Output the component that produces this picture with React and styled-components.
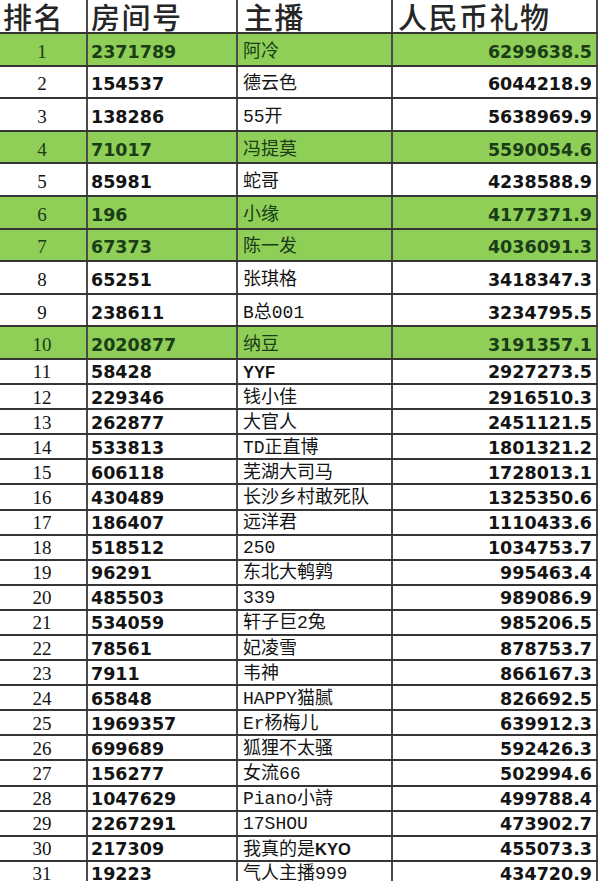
import styled, { createGlobalStyle } from "styled-components";

const GlobalStyle = createGlobalStyle`
  html, body {
    margin: 0;
    padding: 0;
    background: #ffffff;
    overflow: hidden;
  }
`;

const Sheet = styled.table`
  width: 597px;
  border-collapse: collapse;
  table-layout: fixed;
  background: #fff;
`;

const Col = styled.col`
  width: ${(p) => p.$w}px;
`;

const HeadRow = styled.tr`
  height: 33px;
`;

const HeadCell = styled.th`
  padding: 0 0 0 ${(p) => p.$pad || 4}px;
  height: 31px;
  text-align: left;
  vertical-align: middle;
  font-family: "Noto Sans CJK SC", sans-serif;
  font-size: 29px;
  font-weight: 500;
  line-height: 31px;
  color: #262626;
  border-bottom: 2px solid #353535;
  border-right: 2px solid #4a4a4a;
  white-space: nowrap;
  letter-spacing: 1.5px;
`;

const Row = styled.tr`
  height: ${(p) => (p.$big ? 32.6 : 25.1)}px;
  background: ${(p) => (p.$green ? "#8fcf58" : "#ffffff")};
  color: ${(p) => (p.$green ? "#1a3d17" : "#141414")};
`;

const Cell = styled.td`
  padding: ${(p) => (p.$big ? 5 : 2)}px 0 0;
  height: ${(p) => (p.$big ? 25.6 : 21.1)}px;
  line-height: 20px;
  border-bottom: 2px solid #353535;
  border-right: 2px solid #4a4a4a;
  white-space: nowrap;
  overflow: hidden;
`;

const Rank = styled(Cell)`
  text-align: center;
  font-family: "Liberation Serif", serif;
  font-size: 19px;
  padding-right: 2px;
`;

const Room = styled(Cell)`
  padding-left: 3px;
  font-family: "DejaVu Sans", sans-serif;
  font-weight: 700;
  font-size: 17.5px;
`;

const Host = styled(Cell)`
  padding-left: 5px;
  font-family: "Liberation Mono", "Noto Sans CJK SC", monospace;
  font-size: 18px;
`;

const Strong = styled.span`
  font-family: "Liberation Sans", sans-serif;
  font-weight: 700;
  font-size: 16.5px;
`;

const Gift = styled(Cell)`
  text-align: right;
  padding-right: 4px;
  font-family: "DejaVu Sans", sans-serif;
  font-weight: 700;
  font-size: 17.5px;
`;

const rows = [
  ["2371789", "阿冷", "6299638.5", true],
  ["154537", "德云色", "6044218.9"],
  ["138286", "55开", "5638969.9"],
  ["71017", "冯提莫", "5590054.6", true],
  ["85981", "蛇哥", "4238588.9"],
  ["196", "小缘", "4177371.9", true],
  ["67373", "陈一发", "4036091.3", true],
  ["65251", "张琪格", "3418347.3"],
  ["238611", "B总001", "3234795.5"],
  ["2020877", "纳豆", "3191357.1", true],
  ["58428", ["", "YYF"], "2927273.5"],
  ["229346", "钱小佳", "2916510.3"],
  ["262877", "大官人", "2451121.5"],
  ["533813", "TD正直博", "1801321.2"],
  ["606118", "芜湖大司马", "1728013.1"],
  ["430489", "长沙乡村敢死队", "1325350.6"],
  ["186407", "远洋君", "1110433.6"],
  ["518512", "250", "1034753.7"],
  ["96291", "东北大鹌鹑", "995463.4"],
  ["485503", "339", "989086.9"],
  ["534059", "轩子巨2兔", "985206.5"],
  ["78561", "妃凌雪", "878753.7"],
  ["7911", "韦神", "866167.3"],
  ["65848", "HAPPY猫腻", "826692.5"],
  ["1969357", "Er杨梅儿", "639912.3"],
  ["699689", "狐狸不太骚", "592426.3"],
  ["156277", "女流66", "502994.6"],
  ["1047629", "Piano小詩", "499788.4"],
  ["2267291", "17SHOU", "473902.7"],
  ["217309", ["我真的是", "KYO"], "455073.3"],
  ["19223", "气人主播999", "434720.9"],
];

function HostName({ name }) {
  if (Array.isArray(name)) {
    return (
      <>
        {name[0]}
        <Strong>{name[1]}</Strong>
      </>
    );
  }
  return name;
}

export default function App() {
  return (
    <>
      <GlobalStyle />
      <Sheet>
        <colgroup>
          <Col $w={87} />
          <Col $w={150} />
          <Col $w={155} />
          <Col $w={205} />
        </colgroup>
        <thead>
          <HeadRow>
            <HeadCell $pad={3}>排名</HeadCell>
            <HeadCell $pad={3}>房间号</HeadCell>
            <HeadCell $pad={6}>主播</HeadCell>
            <HeadCell $pad={5}>人民币礼物</HeadCell>
          </HeadRow>
        </thead>
        <tbody>
          {rows.map(([room, name, gift, green], i) => {
            const big = i < 10;
            return (
              <Row key={room} $green={green} $big={big}>
                <Rank $big={big}>{i + 1}</Rank>
                <Room $big={big}>{room}</Room>
                <Host $big={big}>
                  <HostName name={name} />
                </Host>
                <Gift $big={big}>{gift}</Gift>
              </Row>
            );
          })}
        </tbody>
      </Sheet>
    </>
  );
}
